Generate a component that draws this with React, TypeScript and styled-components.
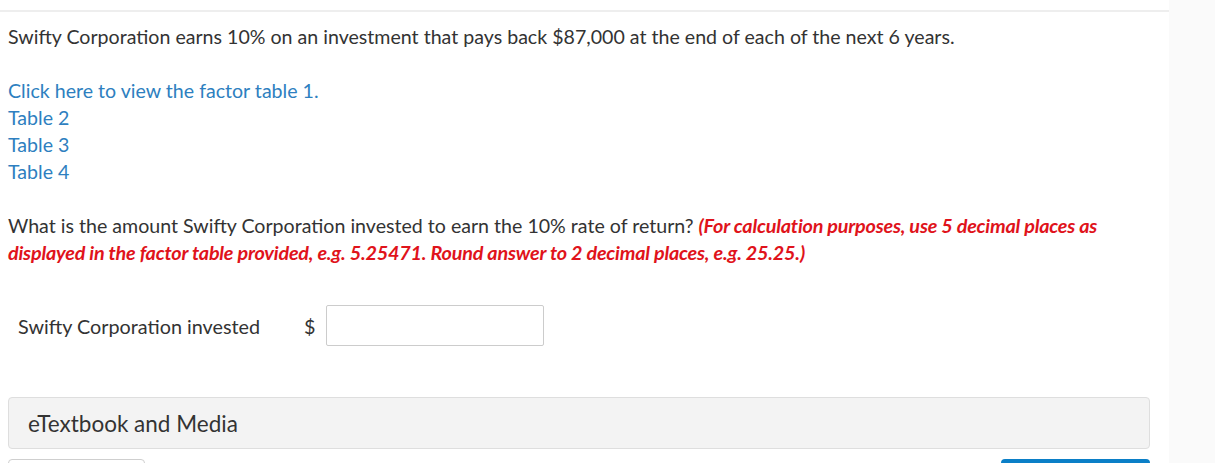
import React from "react";
import styled, { createGlobalStyle } from "styled-components";

const Global = createGlobalStyle`
  html, body {
    margin: 0;
    padding: 0;
    background: #fff;
  }
  body {
    font-family: Lato, "Noto Sans", sans-serif;
    color: #333;
    overflow: hidden;
  }
`;

const Page = styled.div`
  display: flex;
  width: 1215px;
  height: 463px;
  overflow: hidden;
`;

const Main = styled.div`
  width: 1169px;
  padding-top: 10px;
  box-sizing: border-box;
`;

const Side = styled.div`
  flex: 1;
  background: #fafafa;
`;

const Content = styled.div`
  border-top: 2px solid #eeeeee;
  padding: 11px 19px 0 8px;
`;

const Para = styled.p`
  margin: 0;
  font-size: 19.6px;
  line-height: 27px;
`;

const Links = styled.div`
  display: flex;
  flex-direction: column;
  margin: 27px 0;
`;

const Link = styled.a`
  font-size: 19.6px;
  line-height: 27px;
  color: #2e7fc0;
  text-decoration: none;
  cursor: pointer;
`;

const Hint = styled.span`
  color: #e0131b;
  font-size: 19.8px;
  font-weight: 700;
  font-style: italic;
  letter-spacing: -0.2px;
`;

const AnswerRow = styled.div`
  display: flex;
  align-items: center;
  margin: 39px 0 0 10px;
  height: 41px;
`;

const Label = styled.span`
  font-size: 19.8px;
  width: 286px;
`;

const Dollar = styled.span`
  font-size: 19.8px;
  width: 22px;
`;

const Input = styled.input`
  width: 218px;
  height: 41px;
  box-sizing: border-box;
  border: 1px solid #cccccc;
  border-radius: 2px;
  font-family: inherit;
  font-size: 18px;
  padding: 0 8px;
  outline: none;
`;

const Media = styled.div`
  margin-top: 51px;
  height: 52px;
  box-sizing: border-box;
  background: #f3f3f3;
  border: 1px solid #dedede;
  border-radius: 4px;
  display: flex;
  align-items: center;
  padding-left: 19px;
  font-size: 22.5px;
  color: #333;
`;

const Footer = styled.div`
  display: flex;
  justify-content: space-between;
  margin-top: 10px;
`;

const GhostButton = styled.div`
  width: 137px;
  height: 40px;
  border: 1px solid #cfcfcf;
  border-radius: 4px;
  box-sizing: border-box;
`;

const PrimaryButton = styled.div`
  width: 149px;
  height: 40px;
  background: #0b7fc7;
  border-radius: 4px;
`;

export default function App() {
  return (
    <Page>
      <Global />
      <Main>
        <Content>
          <Para>
            Swifty Corporation earns 10% on an investment that pays back $87,000 at the end of each of the next 6 years.
          </Para>
          <Links>
            <Link>Click here to view the factor table 1.</Link>
            <Link>Table 2</Link>
            <Link>Table 3</Link>
            <Link>Table 4</Link>
          </Links>
          <Para>
            What is the amount Swifty Corporation invested to earn the 10% rate of return?{" "}
            <Hint>
              (For calculation purposes, use 5 decimal places as displayed in the factor table provided, e.g. 5.25471. Round answer to 2 decimal places, e.g. 25.25.)
            </Hint>
          </Para>
          <AnswerRow>
            <Label>Swifty Corporation invested</Label>
            <Dollar>$</Dollar>
            <Input type="text" />
          </AnswerRow>
          <Media>eTextbook and Media</Media>
          <Footer>
            <GhostButton />
            <PrimaryButton />
          </Footer>
        </Content>
      </Main>
      <Side />
    </Page>
  );
}
